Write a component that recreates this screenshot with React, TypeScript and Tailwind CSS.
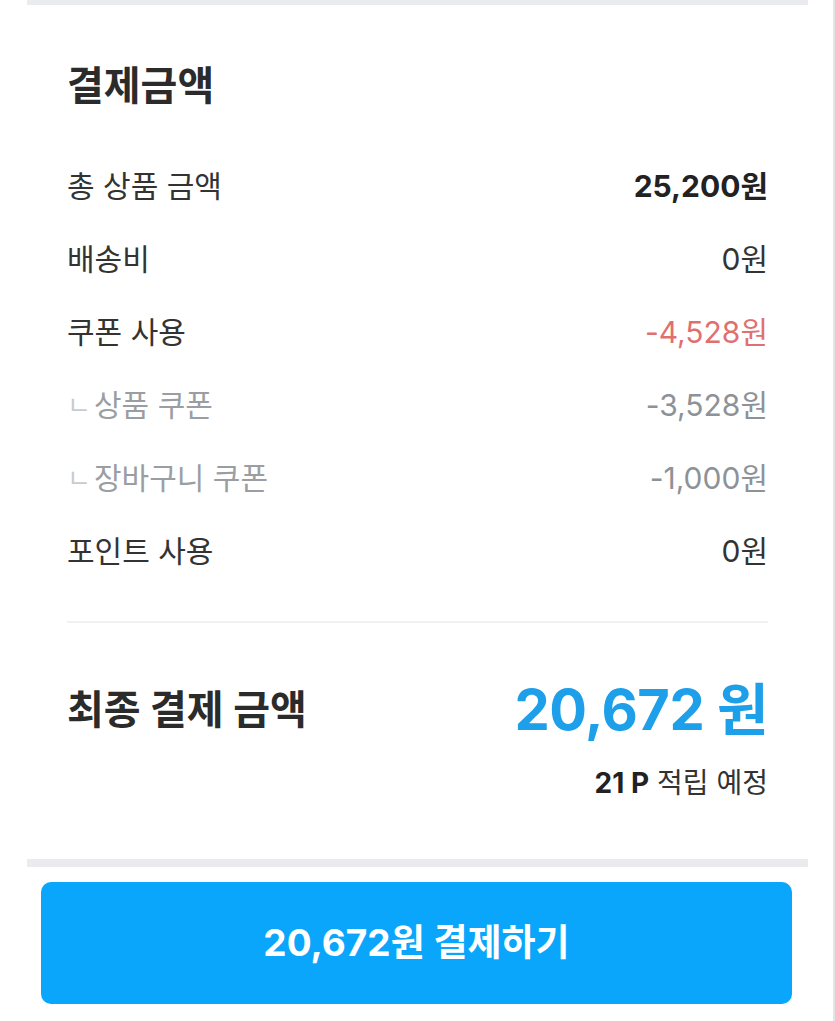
const font = { fontFamily: 'Inter, "Noto Sans CJK KR", "Noto Sans", sans-serif' };

type Row = {
  label: string;
  value: string;
  sub?: boolean;
  tone?: "strong" | "normal" | "red" | "muted";
};

const rows: Row[] = [
  { label: "총 상품 금액", value: "25,200원", tone: "strong" },
  { label: "배송비", value: "0원" },
  { label: "쿠폰 사용", value: "-4,528원", tone: "red" },
  { label: "상품 쿠폰", value: "-3,528원", sub: true, tone: "muted" },
  { label: "장바구니 쿠폰", value: "-1,000원", sub: true, tone: "muted" },
  { label: "포인트 사용", value: "0원" },
];

const valueClass = {
  strong: "font-bold text-[#222222]",
  normal: "text-[#333333]",
  red: "text-[#e0706f]",
  muted: "text-[#8d9297]",
};

function PriceRow({ row }: { row: Row }) {
  return (
    <div className="flex h-[73px] items-center justify-between text-[30px] leading-none">
      {row.sub ? (
        <div className="flex items-center text-[#9a9ea3]">
          <span className="mt-[2px] w-[27px] text-[26px] text-[#c8cbcf]">ㄴ</span>
          <span>{row.label}</span>
        </div>
      ) : (
        <span className="text-[#333333]">{row.label}</span>
      )}
      <span className={valueClass[row.tone ?? "normal"]}>{row.value}</span>
    </div>
  );
}

export default function App() {
  return (
    <div style={font} className="flex w-[835px] flex-col border-r-2 border-[#e3e4e6] bg-white">
      <div className="ml-[27px] mr-[25px] h-[5px] bg-[#e9ebee]" />

      <div className="pl-[67px] pr-[65px]">
        <h1 className="mt-[57px] text-[40px] font-bold leading-[48px] text-[#2b2b2b]">결제금액</h1>

        <div className="mt-[39px]">
          {rows.map((row) => (
            <PriceRow key={row.label} row={row} />
          ))}
        </div>

        <div className="mt-[34px] h-[2px] bg-[#f0f1f2]" />

        <div className="mt-[55px] flex h-[64px] items-center justify-between">
          <span className="text-[40px] font-bold text-[#2b2b2b]">최종 결제 금액</span>
          <span className="text-[56px] font-bold tracking-[-0.5px] text-[#1d9fe9]">20,672 원</span>
        </div>

        <div className="mt-[24px] flex h-[34px] items-center justify-end text-[28px] text-[#333333]">
          <span className="mr-[8px] font-bold text-[#222222]">21 P</span>
          <span>적립 예정</span>
        </div>
      </div>

      <div className="ml-[27px] mr-[25px] mt-[59px] h-[8px] bg-[#e9ebee]" />

      <div className="px-[41px] pt-[15px] pb-[17px]">
        <button className="flex h-[122px] w-full items-center justify-center rounded-[10px] bg-[#0aa6fb] text-[37px] font-bold text-white">
          20,672원 결제하기
        </button>
      </div>
    </div>
  );
}
